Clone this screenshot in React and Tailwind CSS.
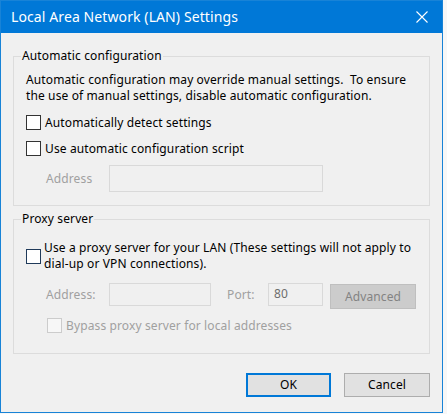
import React from "react";

const font = { fontFamily: '"Segoe UI", "Noto Sans", "Open Sans", sans-serif' };

function Box({ variant = "normal" }) {
  const cls =
    variant === "focus"
      ? "border-[#1f3a5a] bg-white"
      : variant === "disabled"
      ? "border-[#cccccc] bg-[#f7f7f7]"
      : "border-[#333333] bg-white";
  return <div className={`w-[15px] h-[15px] shrink-0 border ${cls}`} />;
}

export default function App() {
  return (
    <div className="w-[447px] h-[414px] bg-[#f7f7f7]" style={font}>
      <div className="w-[443px] h-[413px] border border-[#1883d7] bg-[#f0f0f0] flex flex-col">
        <div className="h-[32px] bg-[#0078d7] flex items-center justify-between pl-[10px] pr-[14px] shrink-0">
          <span className="text-white text-[14px] leading-[20px] tracking-[0.1px] mt-[-1px]">
            Local Area Network (LAN) Settings
          </span>
          <svg width="12" height="12" viewBox="0 0 12 12" className="mt-[-1px]">
            <path d="M0.5 0.5 L11.5 11.5 M11.5 0.5 L0.5 11.5" stroke="white" strokeWidth="1.1" fill="none" />
          </svg>
        </div>

        <div className="px-[12px] text-[12px] leading-[16px] tracking-[0.12px] text-black">
          <fieldset className="mt-[15px] w-[417px] border border-[#dcdcdc] pl-[12px] pr-[8px] pb-[13px]">
            <legend className="ml-[-5px] px-[1px] leading-[16px]">Automatic configuration</legend>
            <div className="mt-[8px]">
              <div>Automatic configuration may override manual settings.&nbsp; To ensure</div>
              <div>the use of manual settings, disable automatic configuration.</div>
            </div>
            <div className="mt-[11px] flex items-center gap-[4px] h-[15px]">
              <Box />
              <span>Automatically detect settings</span>
            </div>
            <div className="mt-[11px] flex items-center gap-[4px] h-[15px]">
              <Box />
              <span>Use automatic configuration script</span>
            </div>
            <div className="mt-[9px] flex items-center">
              <span className="w-[83px] pl-[20px] text-[#a0a0a0]">Address</span>
              <div className="w-[214px] h-[27px] border border-[#d9d9d9] bg-[#f0f0f0]" />
            </div>
          </fieldset>

          <fieldset className="mt-[5px] w-[417px] border border-[#dcdcdc] pl-[12px] pr-[8px] pb-[20px]">
            <legend className="ml-[-5px] px-[1px] leading-[16px]">Proxy server</legend>
            <div className="mt-[13px] flex items-center gap-[3px]">
              <Box variant="focus" />
              <div>
                <div>Use a proxy server for your LAN (These settings will not apply to</div>
                <div>dial-up or VPN connections).</div>
              </div>
            </div>
            <div className="mt-[11px] flex items-start">
              <span className="w-[83px] pl-[20px] mt-[4px] text-[#a0a0a0]">Address:</span>
              <div className="w-[102px] h-[23px] border border-[#d9d9d9] bg-[#f0f0f0]" />
              <span className="w-[57px] pl-[16px] mt-[4px] text-[#a0a0a0]">Port:</span>
              <div className="w-[55px] h-[23px] border border-[#d9d9d9] bg-[#f0f0f0] pl-[5px] leading-[20px] text-[#6d6d6d]">
                80
              </div>
              <div className="ml-[7px] mt-[1px] w-[86px] h-[25px] border border-[#bfbfbf] bg-[#cccccc] flex items-center justify-center text-[#838383]">
                Advanced
              </div>
            </div>
            <div className="mt-[9px] ml-[21px] flex items-center gap-[4px] h-[15px]">
              <Box variant="disabled" />
              <span className="text-[#a0a0a0]">Bypass proxy server for local addresses</span>
            </div>
          </fieldset>

          <div className="mt-[19px] w-[417px] flex justify-end gap-[13px]">
            <div className="w-[85px] h-[24px] border-2 border-[#0078d7] bg-[#e1e1e1] flex items-center justify-center">
              OK
            </div>
            <div className="w-[86px] h-[24px] border border-[#adadad] bg-[#e1e1e1] flex items-center justify-center">
              Cancel
            </div>
          </div>
        </div>
      </div>
    </div>
  );
}
